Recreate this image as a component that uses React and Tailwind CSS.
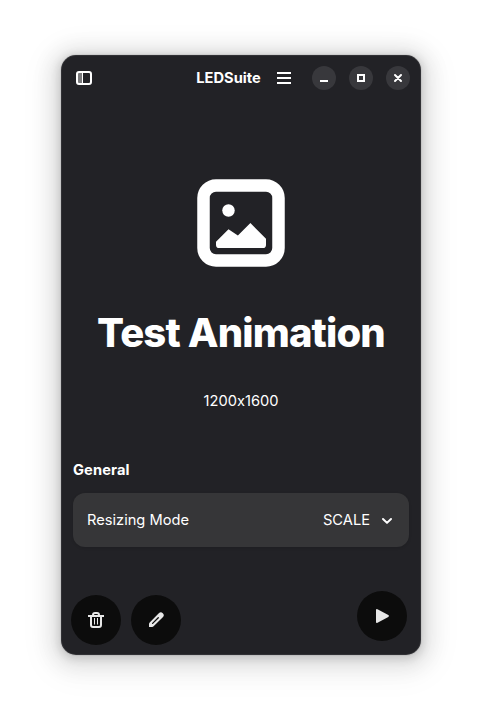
const SidebarIcon = () => (
  <svg viewBox="0 0 16 16" className="size-4" fill="none">
    <rect x="2" y="3" width="5" height="10" fill="#fff" opacity="0.4" />
    <rect x="6" y="2.5" width="1" height="11" fill="#fff" />
    <rect x="1" y="2" width="14" height="12" rx="2" stroke="#fff" strokeWidth="2" />
  </svg>
);

const MenuIcon = () => (
  <svg viewBox="0 0 16 16" className="size-4" fill="#fff">
    <path d="M1 2h14v2H1zM1 7h14v2H1zM1 12h14v2H1z" />
  </svg>
);

const ImageIcon = () => (
  <svg viewBox="0 0 16 16" className="size-[100px]" fill="#fff">
    <path
      fillRule="evenodd"
      d="M4 1h8a3 3 0 0 1 3 3v8a3 3 0 0 1-3 3H4a3 3 0 0 1-3-3V4a3 3 0 0 1 3-3zm0 2a1 1 0 0 0-1 1v8a1 1 0 0 0 1 1h8a1 1 0 0 0 1-1V4a1 1 0 0 0-1-1z"
    />
    <circle cx="6" cy="6" r="1" />
    <path d="M4 11 6 9l1.5 1L9.5 8 12 10.5v1a.5.5 0 0 1-.5.5h-7a.5.5 0 0 1-.5-.5z" />
  </svg>
);

const ChevronIcon = () => (
  <svg viewBox="0 0 16 16" className="size-4" fill="none" stroke="#fff" strokeWidth="2" strokeLinecap="round" strokeLinejoin="round">
    <path d="M4 7 8 10.900 12 7" />
  </svg>
);

const TrashIcon = () => (
  <svg viewBox="0 0 16 16" className="size-4" fill="none" stroke="#e7e7e7">
    <path d="M0 4h16" strokeWidth="2" />
    <path d="M5 3.500V3a2 2 0 0 1 2-2h2a2 2 0 0 1 2 2v.5" strokeWidth="2" />
    <path d="M3 4v9a2 2 0 0 0 2 2h6a2 2 0 0 0 2-2V4" strokeWidth="2" />
    <path d="M6.500 6v6.500M9.500 6v6.500" strokeWidth="1" />
  </svg>
);

const PencilIcon = () => (
  <svg viewBox="0 0 16 16" className="size-4" fill="none">
    <path
      fill="#e7e7e7"
      d="M10.800 1.200a2.700 2.700 0 0 1 4 4L5.600 14.300c-.4.4-.9.7-1.500.7H1v-3.100c0-.6.3-1.100.7-1.500z"
    />
    <path d="M4.600 11.400 10.300 5.700" stroke="#0c0c0c" strokeWidth="1.300" strokeLinecap="round" />
  </svg>
);

const PlayIcon = () => (
  <svg viewBox="0 0 16 16" className="size-4" fill="#e7e7e7">
    <path d="M2 14V2a1 1 0 0 1 1.500-.8l10.800 5.900a1 1 0 0 1 0 1.800L3.500 14.800A1 1 0 0 1 2 14z" />
  </svg>
);

function WindowButton({ label, children }) {
  return (
    <button aria-label={label} className="flex size-6 items-center justify-center rounded-full bg-[#38383c]">
      <svg viewBox="0 0 16 16" className="size-4" fill="none" stroke="#fff" strokeWidth="2">
        {children}
      </svg>
    </button>
  );
}

function RoundButton({ label, children }) {
  return (
    <button aria-label={label} className="flex size-[50px] items-center justify-center rounded-full bg-[#0c0c0c]">
      {children}
    </button>
  );
}

export default function App() {
  return (
    <div className="flex h-[722px] w-[482px] bg-white pt-[55px] pl-[61px] font-['Inter',sans-serif] text-[14.667px] leading-5 text-white">
      <main className="flex h-[600px] w-[360px] flex-col rounded-[15px] bg-[#222226] shadow-[inset_0_0_0_1px_rgba(255,255,255,0.07),0_0_0_1px_rgba(0,0,0,0.05),0_2px_8px_2px_rgba(0,0,0,0.13),0_3px_20px_10px_rgba(0,0,0,0.09),0_6px_32px_16px_rgba(0,0,0,0.04)]">
        <header className="flex h-[46px] items-center pr-[11px] pl-[15px]">
          <SidebarIcon />
          <h1 className="ml-[104px] w-[65px] text-center font-bold whitespace-nowrap">LEDSuite</h1>
          <div className="ml-[15px]">
            <MenuIcon />
          </div>
          <div className="ml-auto flex gap-[13px]">
            <WindowButton label="Minimize">
              <path d="M4 11h8" />
            </WindowButton>
            <WindowButton label="Maximize">
              <path d="M5 5h6v6H5z" />
            </WindowButton>
            <WindowButton label="Close">
              <path d="m5 5 6 6m0-6-6 6" strokeLinecap="round" />
            </WindowButton>
          </div>
        </header>

        <section className="flex flex-col items-center pt-[72px]">
          <ImageIcon />
          <h2 className="mt-9 text-[40px] leading-[48px] font-extrabold tracking-[-0.86px] whitespace-nowrap">Test Animation</h2>
          <p className="mt-[34px] [font-feature-settings:'calt'_0]">1200x1600</p>
        </section>

        <section className="mt-[49px] px-3">
          <h3 className="font-bold tracking-[0.12px]">General</h3>
          <div className="mt-[13px] flex h-[54px] items-center rounded-xl bg-[#363638] pr-[14px] pl-[14px] shadow-[0_1px_3px_rgba(0,0,0,0.12)]">
            <span>Resizing Mode</span>
            <span className="mr-[9px] ml-auto">SCALE</span>
            <ChevronIcon />
          </div>
        </section>

        <footer className="mt-auto flex items-end pr-[14px] pb-[10px] pl-[10px]">
          <div className="flex gap-[10px]">
            <RoundButton label="Delete">
              <TrashIcon />
            </RoundButton>
            <RoundButton label="Edit">
              <PencilIcon />
            </RoundButton>
          </div>
          <div className="mb-1 ml-auto">
            <RoundButton label="Play">
              <PlayIcon />
            </RoundButton>
          </div>
        </footer>
      </main>
    </div>
  );
}
